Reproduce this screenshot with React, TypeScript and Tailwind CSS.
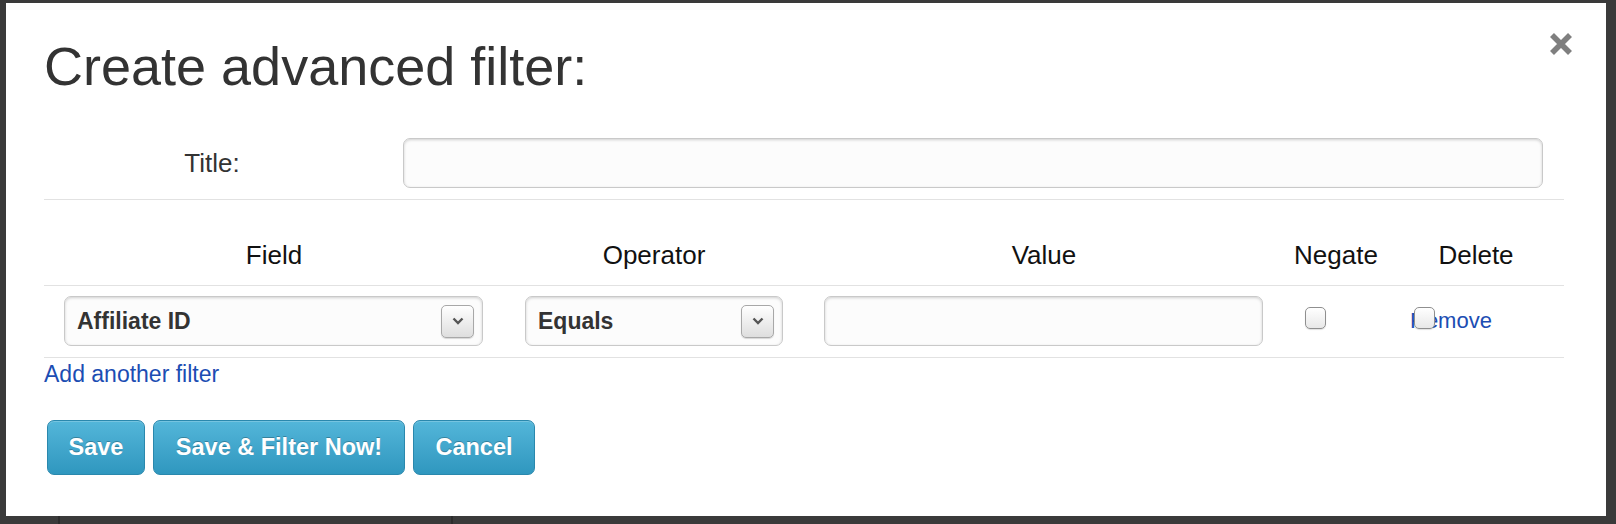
import React from "react";

function Chevron() {
  return (
    <svg width="12" height="8" viewBox="0 0 12 8">
      <path d="M1.5 1.5 L6 6 L10.5 1.5" fill="none" stroke="#555" strokeWidth="2.4" />
    </svg>
  );
}

function Select({ label, width }: { label: string; width: string }) {
  return (
    <div
      className={`${width} h-[50px] flex items-center justify-between rounded-[7px] border border-[#c9c9c9] bg-[#fcfcfc] shadow-[inset_0_1px_3px_rgba(0,0,0,0.18)] pl-[12px] pr-[8px]`}
    >
      <span className="text-[23px] font-bold text-[#333] leading-[28px]">{label}</span>
      <div className="w-[33px] h-[33px] rounded-[5px] border border-[#a8a8a8] bg-linear-to-b from-[#ffffff] to-[#dedede] shadow-[0_1px_1px_rgba(0,0,0,0.15)] flex items-center justify-center">
        <Chevron />
      </div>
    </div>
  );
}

function Checkbox() {
  return (
    <div className="w-[21px] h-[22px] rounded-[5px] border border-[#8f8f8f] bg-linear-to-b from-[#ffffff] to-[#e8e8e8] shadow-[0_1px_1px_rgba(0,0,0,0.12)]" />
  );
}

function Btn({ children, w }: { children: React.ReactNode; w: string }) {
  return (
    <div
      className={`${w} h-[55px] flex items-center justify-center rounded-[7px] border border-[#2a88ad] bg-linear-to-b from-[#53b6d9] to-[#2f97bf] text-white font-bold text-[23.5px] [text-shadow:0_-1px_0_rgba(0,0,0,0.25)] shadow-[inset_0_1px_0_rgba(255,255,255,0.2)]`}
    >
      {children}
    </div>
  );
}

export default function App() {
  return (
    <div className="w-[1616px] h-[524px] bg-[#3a3a3a] overflow-hidden flex flex-col font-['Liberation_Sans',Arial,Helvetica,sans-serif]">
      <div className="pt-[3px] pl-[6px]">
        <div className="relative w-[1600px] h-[513px] bg-white pl-[38px] pr-[42px] pt-[36px]">
          <div className="absolute top-[29px] right-[33px] w-[24px] h-[24px]">
            <svg width="24" height="24" viewBox="0 0 24 24">
              <path d="M3 3 L21 21 M21 3 L3 21" stroke="#7f7f7f" strokeWidth="5.6" />
            </svg>
          </div>

          <h1 className="text-[54px] leading-[54px] text-[#333] font-normal">Create advanced filter:</h1>

          <div className="mt-[34px] flex items-center py-[11px] border-b border-[#e2e2e2]">
            <div className="w-[336px] text-center text-[26px] leading-[30px] text-[#333]">Title:</div>
            <div className="ml-[23px] w-[1140px] h-[50px] rounded-[7px] border border-[#c9c9c9] bg-[#fcfcfc] shadow-[inset_0_1px_3px_rgba(0,0,0,0.18)]" />
          </div>

          <div className="grid grid-cols-[460px_300px_480px_104px_176px] pt-[40px] pb-[15px] border-b border-[#e2e2e2] text-[26px] leading-[30px] text-[#111] text-center">
            <div>Field</div>
            <div>Operator</div>
            <div>Value</div>
            <div>Negate</div>
            <div>Delete</div>
          </div>

          <div className="grid grid-cols-[460px_300px_480px_104px_176px] pt-[10px] pb-[11px] border-b border-[#e2e2e2]">
            <div className="pl-[20px]">
              <Select label="Affiliate ID" width="w-[419px]" />
            </div>
            <div className="pl-[21px]">
              <Select label="Equals" width="w-[258px]" />
            </div>
            <div className="pl-[20px]">
              <div className="w-[439px] h-[50px] rounded-[7px] border border-[#c9c9c9] bg-[#fcfcfc] shadow-[inset_0_1px_3px_rgba(0,0,0,0.18)]" />
            </div>
            <div className="pl-[21px] pt-[11px]">
              <Checkbox />
            </div>
            <div className="relative pl-[22px] flex items-center">
              <span className="text-[22px] leading-[26px] text-[#1c4db3]">Remove</span>
              <div className="absolute left-[26px] top-[11px]">
                <Checkbox />
              </div>
            </div>
          </div>

          <div className="mt-[2px] text-[23px] leading-[28px] text-[#1c4db3]">Add another filter</div>

          <div className="mt-[32px] ml-[3px] flex gap-[8px]">
            <Btn w="w-[98px]">Save</Btn>
            <Btn w="w-[252px]">Save &amp; Filter Now!</Btn>
            <Btn w="w-[122px]">Cancel</Btn>
          </div>
        </div>
      </div>
      <div className="flex h-[8px]">
        <div className="w-[58px]" />
        <div className="w-[393px] border-l-2 border-[#2c2c2c]" />
        <div className="flex-1 border-l-2 border-[#2c2c2c]" />
      </div>
    </div>
  );
}
